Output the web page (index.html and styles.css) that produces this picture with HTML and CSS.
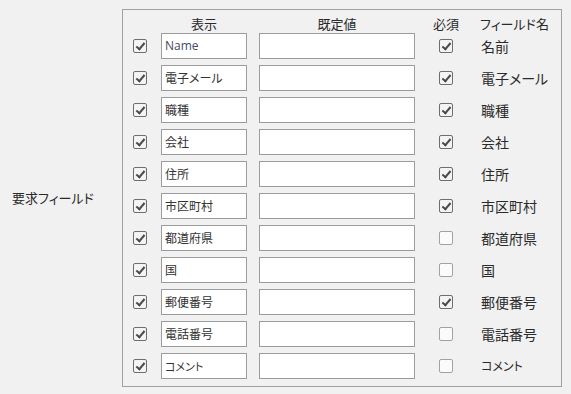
FILE: index.html
```html
<!DOCTYPE html>
<html>
<head>
    <title>要求フィールド</title>
    <link rel="stylesheet" href="styles.css">
</head>
<body>
    <div class="page">
        <div class="side-label">要求フィールド</div>

        <div class="group">
            <div class="row head">
                <div class="c-show"></div>
                <div class="c-disp">表示</div>
                <div class="c-def">既定値</div>
                <div class="c-req">必須</div>
                <div class="c-name">フィールド名</div>
            </div>

            <div class="row">
                <div class="c-show"><span class="cb on"></span></div>
                <div class="c-disp"><div class="input latin">Name</div></div>
                <div class="c-def"><div class="input"></div></div>
                <div class="c-req"><span class="cb on"></span></div>
                <div class="c-name">名前</div>
            </div>
            <div class="row">
                <div class="c-show"><span class="cb on"></span></div>
                <div class="c-disp"><div class="input">電子メール</div></div>
                <div class="c-def"><div class="input"></div></div>
                <div class="c-req"><span class="cb on"></span></div>
                <div class="c-name">電子メール</div>
            </div>
            <div class="row">
                <div class="c-show"><span class="cb on"></span></div>
                <div class="c-disp"><div class="input">職種</div></div>
                <div class="c-def"><div class="input"></div></div>
                <div class="c-req"><span class="cb on"></span></div>
                <div class="c-name">職種</div>
            </div>
            <div class="row">
                <div class="c-show"><span class="cb on"></span></div>
                <div class="c-disp"><div class="input">会社</div></div>
                <div class="c-def"><div class="input"></div></div>
                <div class="c-req"><span class="cb on"></span></div>
                <div class="c-name">会社</div>
            </div>
            <div class="row">
                <div class="c-show"><span class="cb on"></span></div>
                <div class="c-disp"><div class="input">住所</div></div>
                <div class="c-def"><div class="input"></div></div>
                <div class="c-req"><span class="cb on"></span></div>
                <div class="c-name">住所</div>
            </div>
            <div class="row">
                <div class="c-show"><span class="cb on"></span></div>
                <div class="c-disp"><div class="input">市区町村</div></div>
                <div class="c-def"><div class="input"></div></div>
                <div class="c-req"><span class="cb on"></span></div>
                <div class="c-name">市区町村</div>
            </div>
            <div class="row">
                <div class="c-show"><span class="cb on"></span></div>
                <div class="c-disp"><div class="input">都道府県</div></div>
                <div class="c-def"><div class="input"></div></div>
                <div class="c-req"><span class="cb"></span></div>
                <div class="c-name">都道府県</div>
            </div>
            <div class="row">
                <div class="c-show"><span class="cb on"></span></div>
                <div class="c-disp"><div class="input">国</div></div>
                <div class="c-def"><div class="input"></div></div>
                <div class="c-req"><span class="cb"></span></div>
                <div class="c-name">国</div>
            </div>
            <div class="row">
                <div class="c-show"><span class="cb on"></span></div>
                <div class="c-disp"><div class="input">郵便番号</div></div>
                <div class="c-def"><div class="input"></div></div>
                <div class="c-req"><span class="cb on"></span></div>
                <div class="c-name">郵便番号</div>
            </div>
            <div class="row">
                <div class="c-show"><span class="cb on"></span></div>
                <div class="c-disp"><div class="input">電話番号</div></div>
                <div class="c-def"><div class="input"></div></div>
                <div class="c-req"><span class="cb"></span></div>
                <div class="c-name">電話番号</div>
            </div>
            <div class="row">
                <div class="c-show"><span class="cb on"></span></div>
                <div class="c-disp"><div class="input small">コメント</div></div>
                <div class="c-def"><div class="input"></div></div>
                <div class="c-req"><span class="cb"></span></div>
                <div class="c-name small">コメント</div>
            </div>
        </div>
    </div>
</body>
</html>
```

FILE: styles.css
```css
body {
    margin: 0;
    background: #f1f1f1;
    font-family: "Noto Sans CJK JP", "Noto Sans", sans-serif;
    font-feature-settings: "palt";
    color: #2a2a2a;
}

.page {
    display: flex;
    align-items: center;
    padding: 9px 0 0 12px;
}

.side-label {
    width: 110px;
    font-size: 13px;
    line-height: 17px;
    margin-top: -1px;
}

.group {
    width: 428px;
    height: 376px;
    border: 1px solid #a0a0a0;
    padding-left: 10px;
}

.row {
    display: flex;
    align-items: center;
    height: 26px;
    margin-top: 6px;
}

.row.head {
    margin-top: 0;
    height: 19px;
    padding-top: 4px;
    font-size: 13px;
    line-height: 17px;
    white-space: nowrap;
}

.head + .row {
    margin-top: 0;
}

.c-show {
    width: 28px;
    display: flex;
    align-items: center;
}

.c-disp {
    width: 98px;
}

.c-def {
    width: 180px;
}

.c-req {
    width: 42px;
    display: flex;
    align-items: center;
}

.c-name {
    font-size: 14px;
    line-height: 18px;
}

.head .c-disp {
    width: 86px;
    margin-right: 12px;
    text-align: center;
}

.head .c-def {
    width: 156px;
    margin-right: 24px;
    text-align: center;
}

.head .c-req {
    display: block;
    width: 42px;
    margin-left: -14px;
    margin-right: 14px;
    text-align: center;
}

.head .c-name {
    font-size: 13px;
    margin-left: -1px;
}

.input {
    height: 26px;
    box-sizing: border-box;
    border: 1px solid #9c9c9c;
    background: #fff;
    padding: 0 3px;
    font-size: 12px;
    line-height: 24px;
    color: #333;
    white-space: nowrap;
    overflow: hidden;
}

.c-disp .input {
    width: 86px;
}

.c-def .input {
    width: 156px;
}

.input.latin {
    color: #434a68;
    font-family: "Open Sans", "Noto Sans", sans-serif;
}

.input.small {
    font-size: 11px;
}

.c-name.small {
    font-size: 12px;
}

.cb {
    display: block;
    width: 12px;
    height: 12px;
    border: 1px solid #a2a2a2;
    border-radius: 2px;
    background: #fbfbfb;
    position: relative;
}

.cb.on {
    border-color: #6e6e6e;
    background: #f4f4f4;
}

.cb.on::after {
    content: "";
    position: absolute;
    left: 4px;
    top: 1px;
    width: 3px;
    height: 7px;
    border: solid #4a4a4a;
    border-width: 0 2px 2px 0;
    transform: rotate(40deg);
}
```
